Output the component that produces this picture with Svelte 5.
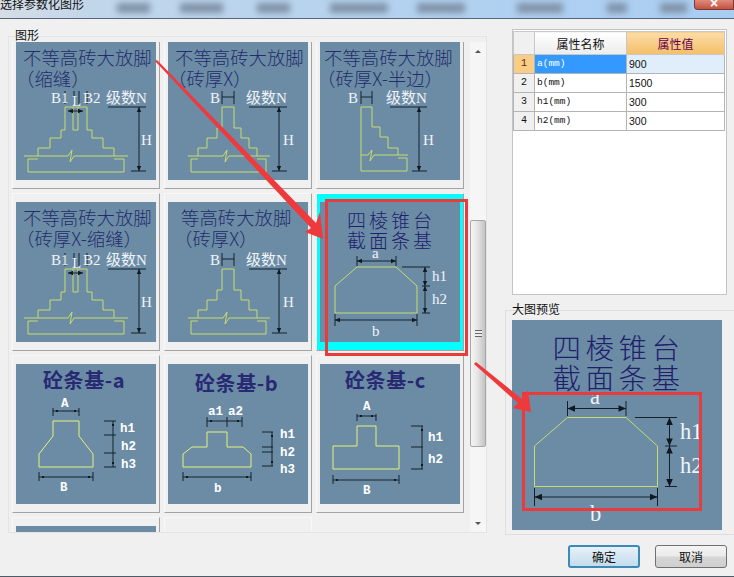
<script lang="ts">
  type Dim = { p: number[]; sq?: boolean };
  type Label = { t: string; x: number; y: number };
  type Drawing = {
    titles: { t: string; x: number; y: number }[];
    heavy?: boolean;
    wide?: boolean;
    shapes: string[];
    ticks: number[][];
    dims: Dim[];
    labels: Label[];
    mono?: boolean;
  };

  const slotted = {
    shapes: [
      "22,116 22,108 34,108 34,98 45,98 45,90 49,90 49,67 71,67 71,90 76,90 76,98 87,98 87,108 98,108 98,116",
      "57,67 57,90 62,90 62,67",
      "8,116 52,116 56,110 54,122 58,116 112,116",
      "22,119 12,119 12,132 108,132 108,119 98,119",
    ],
    ticks: [[49, 51, 49, 64], [58, 51, 58, 64], [63, 51, 63, 64], [71, 51, 71, 64], [92, 67, 130, 67], [115, 131, 130, 131]],
    dims: [{ p: [123, 67, 123, 131] }, { p: [52, 71, 67, 71] }],
    labels: [
      { t: "B1", x: 35, y: 63 },
      { t: "L", x: 56, y: 66 },
      { t: "B2", x: 67, y: 63 },
      { t: "级数N", x: 90, y: 63 },
      { t: "H", x: 125, y: 105 },
    ],
  };

  const plain = {
    shapes: [
      "30,116 30,108 39,108 39,98 49,98 49,88 54,88 54,67 66,67 66,88 73,88 73,98 81,98 81,108 89,108 89,116",
      "20,116 55,116 59,110 57,122 61,116 102,116",
      "30,119 23,119 23,132 98,132 98,119 89,119",
    ],
    ticks: [[54, 51, 54, 64], [66, 51, 66, 64], [54, 57, 66, 57], [81, 67, 119, 67], [104, 131, 119, 131]],
    dims: [{ p: [111, 67, 111, 131] }],
    labels: [
      { t: "B", x: 42, y: 63 },
      { t: "级数N", x: 78, y: 63 },
      { t: "H", x: 115, y: 105 },
    ],
  };

  const half = {
    shapes: [
      "41,131 41,67 52,67 52,87 60,87 60,97 68,97 68,108 78,108 78,115",
      "41,115 48,115 52,110 50,121 54,115 88,115",
      "78,118 87,118 87,131 41,131",
    ],
    ticks: [[41, 51, 41, 64], [52, 51, 52, 64], [41, 57, 52, 57], [70, 67, 107, 67], [92, 131, 107, 131]],
    dims: [{ p: [99, 67, 99, 131] }],
    labels: [
      { t: "B", x: 28, y: 63 },
      { t: "级数N", x: 66, y: 63 },
      { t: "H", x: 103, y: 105 },
    ],
  };

  const frustum: Drawing = {
    titles: [
      { t: "四棱锥台", x: 71, y: 26 },
      { t: "截面条基", x: 71, y: 46 },
    ],
    wide: true,
    shapes: ["37,65 76,65 97,84 97,111 15,111 15,84 37,65"],
    ticks: [[37, 54, 37, 64], [76, 54, 76, 64], [82, 65, 110, 65], [102, 84, 110, 84], [102, 111, 110, 111], [15, 112, 15, 124], [97, 112, 97, 124]],
    dims: [
      { p: [37, 59, 76, 59] },
      { p: [15, 118, 97, 118] },
      { p: [105, 65, 105, 84] },
      { p: [105, 84, 105, 111] },
    ],
    labels: [
      { t: "a", x: 52, y: 56 },
      { t: "b", x: 52, y: 134 },
      { t: "h1", x: 112, y: 79 },
      { t: "h2", x: 112, y: 102 },
    ],
  };

  const tiles: (Drawing & { selected?: boolean })[] = [
    { titles: [{ t: "不等高砖大放脚", x: 7, y: 25 }, { t: "（缩缝）", x: 0, y: 46 }], ...slotted },
    { titles: [{ t: "不等高砖大放脚", x: 7, y: 25 }, { t: "（砖厚X）", x: 0, y: 46 }], ...plain },
    { titles: [{ t: "不等高砖大放脚", x: 4, y: 25 }, { t: "（砖厚X-半边）", x: -3, y: 46 }], ...half },
    { titles: [{ t: "不等高砖大放脚", x: 7, y: 23 }, { t: "（砖厚X-缩缝）", x: 0, y: 44 }], ...slotted },
    { titles: [{ t: "等高砖大放脚", x: 13, y: 23 }, { t: "（砖厚X）", x: 6, y: 44 }], ...plain },
    { ...frustum, selected: true },
    {
      titles: [{ t: "砼条基-a", x: 27, y: 24 }],
      heavy: true,
      mono: true,
      shapes: ["37,57 63,57 63,72 77,90 77,103 23,103 23,90 37,72 37,57"],
      ticks: [[37, 44, 37, 52], [63, 44, 63, 52], [23, 108, 23, 117], [77, 108, 77, 117], [88, 57, 100, 57], [88, 71, 100, 71], [88, 89, 100, 89], [88, 103, 100, 103]],
      dims: [
        { p: [37, 47, 63, 47], sq: true },
        { p: [23, 113, 77, 113], sq: true },
        { p: [97, 57, 97, 103], sq: true },
      ],
      labels: [
        { t: "A", x: 45, y: 43 },
        { t: "B", x: 44, y: 127 },
        { t: "h1", x: 104, y: 68 },
        { t: "h2", x: 105, y: 86 },
        { t: "h3", x: 105, y: 104 },
      ],
    },
    {
      titles: [{ t: "砼条基-b", x: 27, y: 27 }],
      heavy: true,
      mono: true,
      shapes: ["39,68 59,68 59,83 75,83 83,90 83,103 15,103 15,90 24,83 39,83 39,68"],
      ticks: [[39, 53, 39, 63], [59, 53, 59, 63], [74, 53, 74, 63], [15, 108, 15, 117], [83, 108, 83, 117], [94, 68, 105, 68], [94, 83, 105, 83], [94, 88, 105, 88], [94, 102, 105, 102]],
      dims: [
        { p: [39, 57, 74, 57], sq: true },
        { p: [15, 113, 83, 113], sq: true },
        { p: [104, 68, 104, 102], sq: true },
      ],
      labels: [
        { t: "a1", x: 40, y: 51 },
        { t: "a2", x: 60, y: 51 },
        { t: "b", x: 46, y: 128 },
        { t: "h1", x: 112, y: 74 },
        { t: "h2", x: 112, y: 92 },
        { t: "h3", x: 112, y: 109 },
      ],
    },
    {
      titles: [{ t: "砼条基-c", x: 25, y: 24 }],
      heavy: true,
      mono: true,
      shapes: ["37,62 56,62 56,82 79,82 79,105 13,105 13,82 37,82 37,62"],
      ticks: [[37, 50, 37, 57], [56, 50, 56, 57], [13, 111, 13, 120], [79, 111, 79, 120], [91, 62, 103, 62], [91, 83, 103, 83], [91, 105, 103, 105]],
      dims: [
        { p: [37, 52, 56, 52], sq: true },
        { p: [13, 116, 79, 116], sq: true },
        { p: [102, 62, 102, 105], sq: true },
      ],
      labels: [
        { t: "A", x: 43, y: 46 },
        { t: "B", x: 43, y: 130 },
        { t: "h1", x: 108, y: 77 },
        { t: "h2", x: 108, y: 99 },
      ],
    },
    { titles: [], shapes: [], ticks: [], dims: [], labels: [] },
  ];

  const rows = [
    { id: 1, name: "a(mm)", value: "900" },
    { id: 2, name: "b(mm)", value: "1500" },
    { id: 3, name: "h1(mm)", value: "300" },
    { id: 4, name: "h2(mm)", value: "300" },
  ];

  // smudged toolbar in the title bar: [gap before, width]
  const blobs = [
    [33, 33],
    [30, 43],
    [34, 33],
    [40, 58],
    [29, 48],
    [52, 46],
    [44, 20],
    [33, 27],
  ];

  function heads(p: number[], sq = false) {
    const [x1, y1, x2, y2] = p;
    const a = Math.atan2(y2 - y1, x2 - x1);
    const c = Math.cos(a);
    const s = Math.sin(a);
    if (sq) {
      const q = (x: number, y: number) =>
        `${x - 1},${y - 1} ${x + 1},${y - 1} ${x + 1},${y + 1} ${x - 1},${y + 1}`;
      return [q(x1 + c * 4, y1 + s * 4), q(x2 - c * 4, y2 - s * 4)];
    }
    const tri = (x: number, y: number, d: number) =>
      `${x},${y} ${x + d * c * 5 - s * 2.2},${y + d * s * 5 + c * 2.2} ${x + d * c * 5 + s * 2.2},${y + d * s * 5 - c * 2.2}`;
    return [tri(x1, y1, 1), tri(x2, y2, -1)];
  }
</script>

{#snippet drawing(d: Drawing)}
  <svg class="pic" viewBox="0 0 140 140">
    {#each d.titles as title}
      <text
        class="pic__title"
        class:pic__title--heavy={d.heavy}
        class:pic__title--wide={d.wide}
        x={title.x}
        y={title.y}>{title.t}</text>
    {/each}
    {#each d.shapes as points}
      <polyline class="pic__shape" class:pic__shape--bright={d.heavy} {points} />
    {/each}
    {#each d.ticks as t}
      <line class="pic__tick" x1={t[0]} y1={t[1]} x2={t[2]} y2={t[3]} />
    {/each}
    {#each d.dims as dim}
      <line class="pic__tick" x1={dim.p[0]} y1={dim.p[1]} x2={dim.p[2]} y2={dim.p[3]} />
      {#each heads(dim.p, dim.sq) as points}
        <polygon class="pic__head" {points} />
      {/each}
    {/each}
    {#each d.labels as label}
      <text class="pic__label" class:pic__label--mono={d.mono} x={label.x} y={label.y}>{label.t}</text>
    {/each}
  </svg>
{/snippet}

<div class="dialog">
  <header class="titlebar">
    <span class="titlebar__text">选择参数化图形</span>
    <div class="titlebar__blur">
      {#each blobs as b}
        <i style:margin-left="{b[0]}px" style:width="{b[1]}px"></i>
      {/each}
    </div>
    <span class="titlebar__close">×</span>
  </header>

  <main class="body">
    <section class="left">
      <div class="caption">图形</div>
      <div class="group">
        <div class="viewport">
          <div class="tiles">
            {#each tiles as tile}
              <div class="tile" class:tile--selected={tile.selected}>
                {@render drawing(tile)}
              </div>
            {/each}
            <div class="tile"></div>
          </div>
        </div>
        <div class="scroll">
          <div class="scroll__btn"><span class="tri tri--up"></span></div>
          <div class="scroll__thumb"><span class="scroll__grip"></span></div>
          <div class="scroll__rest"></div>
          <div class="scroll__btn"><span class="tri tri--down"></span></div>
        </div>
      </div>
    </section>

    <aside class="right">
      <div class="panel">
        <table>
          <thead>
            <tr>
              <th class="idx"></th>
              <th class="name">属性名称</th>
              <th class="val">属性值</th>
            </tr>
          </thead>
          <tbody>
            {#each rows as row, i}
              <tr class:active={i === 0}>
                <td class="idx">{row.id}</td>
                <td class="name">{row.name}</td>
                <td class="val">{row.value}</td>
              </tr>
            {/each}
          </tbody>
        </table>
      </div>
      <div class="caption caption--preview">大图预览</div>
      <div class="preview">
        {@render drawing(frustum)}
      </div>
    </aside>
  </main>

  <footer class="footer">
    <button class="btn btn--primary">确定</button>
    <button class="btn">取消</button>
  </footer>

  <!-- annotations someone drew over the screenshot -->
  <svg class="marks" viewBox="0 0 734 577">
    <rect x="326.5" y="200.5" width="140" height="154" />
    <rect x="523.5" y="393.5" width="177" height="116" />
    <polygon points="155,61 157,60 316,223 320,212 323,239 305,232 311,228" />
    <polygon points="474,364 476,362 522,399 528,390 531,412 513,408 518,403" />
  </svg>
</div>

<style>
  :global(body) {
    margin: 0;
    background: #f0f0f0;
  }

  .dialog {
    position: relative;
    display: flex;
    flex-direction: column;
    width: 734px;
    height: 577px;
    overflow: hidden;
    background: #f0f0f0;
    color: #111;
    font-family: "Noto Sans CJK SC", "Liberation Sans", sans-serif;
    font-size: 12px;
  }

  .titlebar {
    display: flex;
    flex: none;
    height: 18px;
    overflow: hidden;
    border-bottom: 1px solid #56657a;
    background: linear-gradient(to right, #d5dde6 0, #c2d6ea 90px, #b3d2f0 400px, #a9cdf2 100%);
  }

  .titlebar__text {
    flex: none;
    width: 84px;
    margin-top: -4px;
    font-size: 12px;
    line-height: 16px;
    white-space: nowrap;
  }

  .titlebar__blur {
    display: flex;
    flex: 1;
    align-items: center;
    padding: 0 0 3px;
    filter: blur(3px);
  }

  .titlebar__blur i {
    flex: none;
    height: 10px;
    background: #8093a8;
  }

  .titlebar__close {
    flex: none;
    width: 38px;
    height: 9px;
    border: 1px solid #7a3b34;
    border-top: 0;
    border-radius: 0 0 0 4px;
    background: linear-gradient(#e08b7c, #c4523f);
    color: #fff;
    font-family: "Liberation Sans", sans-serif;
    font-size: 14px;
    font-weight: bold;
    line-height: 6px;
    text-align: center;
  }

  .body {
    display: flex;
    flex: 1;
    min-height: 0;
  }

  .left {
    flex: none;
    width: 497px;
    padding: 9px 0 0 8px;
  }

  .caption {
    position: relative;
    margin-left: 7px;
    font-size: 12px;
    line-height: 14px;
  }

  .group {
    display: flex;
    gap: 2px;
    box-sizing: border-box;
    width: 479px;
    height: 497px;
    margin-top: -6px;
    padding: 5px 0 0 3px;
    border: 1px solid #e2e4e6;
  }

  .viewport {
    flex: none;
    width: 456px;
    overflow: hidden;
  }

  .tiles {
    display: grid;
    grid-template-columns: repeat(3, 148px);
    grid-auto-rows: 158px;
    gap: 4px;
    margin-top: -11px;
  }

  .tile {
    box-sizing: border-box;
    padding: 8px 3px;
    border-right: 1px solid #a3a3a3;
    border-bottom: 1px solid #a3a3a3;
    border-top: 1px solid #f8f8f8;
    border-left: 1px solid #f8f8f8;
  }

  .tile:empty {
    border-color: #f8f8f8;
  }

  .tile--selected {
    background: #00ffff;
  }

  .pic {
    display: block;
    width: 100%;
    height: 140px;
    background: #6c8ca6;
  }

  .pic__title {
    fill: #232c6c;
    font-family: "Noto Sans CJK SC", "Liberation Serif", serif;
    font-size: 18.4px;
    font-weight: 300;
  }

  .pic__title--heavy {
    fill: #272a72;
    font-size: 20px;
    font-weight: 700;
    letter-spacing: 0.6px;
  }

  .pic__title--wide {
    fill: #1e206c;
    font-size: 19px;
    letter-spacing: 3px;
    text-anchor: middle;
  }

  .pic__shape {
    fill: none;
    stroke: #c6dc6c;
    stroke-width: 1;
    vector-effect: non-scaling-stroke;
  }

  .pic__shape--bright {
    stroke: #e4f27a;
  }

  .pic__tick {
    stroke: #14202c;
    stroke-width: 1;
    vector-effect: non-scaling-stroke;
  }

  .pic__head {
    fill: #101820;
  }

  .pic__label {
    fill: #f0f4f8;
    font-family: "Liberation Serif", "Noto Sans CJK SC", serif;
    font-size: 15px;
  }

  .pic__label--mono {
    fill: #fff;
    font-family: "Liberation Mono", monospace;
    font-size: 12.5px;
    font-weight: 700;
  }

  .scroll {
    display: flex;
    flex: none;
    flex-direction: column;
    width: 16px;
    background: #f6f6f6;
  }

  .scroll__btn {
    display: flex;
    flex: none;
    align-items: center;
    justify-content: center;
    height: 18px;
  }

  .tri {
    width: 0;
    height: 0;
    border-right: 3px solid transparent;
    border-left: 3px solid transparent;
  }

  .tri--up {
    border-bottom: 3px solid #555;
  }

  .tri--down {
    border-top: 3px solid #555;
  }

  .scroll__thumb {
    display: flex;
    flex: none;
    align-items: center;
    justify-content: center;
    box-sizing: border-box;
    height: 227px;
    margin-top: 160px;
    border: 1px solid #a8a8a8;
    border-radius: 2px;
    background: linear-gradient(to right, #f4f4f4, #e8e8e8 40%, #c4c4c4);
  }

  .scroll__grip {
    width: 7px;
    height: 7px;
    background: repeating-linear-gradient(#666 0 1px, #eee 1px 3px);
  }

  .scroll__rest {
    flex: 1;
  }

  .right {
    flex: 1;
    padding: 10px 0 0;
  }

  .panel {
    box-sizing: border-box;
    width: 215px;
    height: 266px;
    margin-left: 7px;
    padding: 1px 0 0 0;
    border: 1px solid #c4c4c4;
    background: #fff;
  }

  table {
    width: 212px;
    table-layout: fixed;
    border-collapse: collapse;
    font-size: 11px;
  }

  th {
    height: 22px;
    padding: 0;
    border: 1px solid #c8c8c8;
    background: linear-gradient(#fff, #ececec);
    font-size: 12px;
    font-weight: 400;
  }

  th.idx {
    width: 20px;
    background: #f0f0f0;
  }

  th.name {
    width: 91px;
  }

  th.val {
    background: linear-gradient(#fbdca8, #f5bf68);
    color: #6a0050;
  }

  td {
    height: 18px;
    padding: 0 0 0 2px;
    border: 1px solid #b4b4b4;
    line-height: 18px;
  }

  td.idx {
    padding: 0;
    background: #f0f0f0;
    text-align: center;
    font-family: "Liberation Mono", monospace;
    font-size: 10px;
  }

  td.name {
    font-family: "Liberation Mono", monospace;
    font-size: 9.5px;
  }

  td.val {
    font-family: "Liberation Sans", sans-serif;
    font-size: 10.5px;
  }

  .active td.idx {
    background: #f8cd85;
    color: #6a1a10;
  }

  .active td.name {
    background: #3399ff;
    color: #fff;
  }

  .active td.val {
    background: #e0eefc;
  }

  .caption--preview {
    margin: 7px 0 0 7px;
  }

  .preview {
    box-sizing: border-box;
    height: 225px;
    margin-top: -6px;
    padding: 9px 0 0 6px;
    border: 1px solid #dcdfe2;
    border-right: 0;
  }

  .preview .pic {
    width: 210px;
    height: 210px;
  }

  .footer {
    display: flex;
    flex: none;
    gap: 15px;
    justify-content: flex-end;
    box-sizing: border-box;
    height: 43px;
    padding: 11px 7px 0 0;
    border-bottom: 1px solid #4d5a68;
  }

  .btn {
    width: 72px;
    height: 23px;
    padding: 0;
    border: 1px solid #707070;
    border-radius: 3px;
    background: linear-gradient(#f4f4f4 0, #ebebeb 48%, #d6d6d6 52%, #cfcfcf 100%);
    color: #111;
    font-family: inherit;
    font-size: 12px;
    line-height: 20px;
  }

  .btn--primary {
    border: 2px solid #3c8ab8;
    background: linear-gradient(#e6f1f8, #c4dcec);
  }

  .marks {
    position: absolute;
    top: 0;
    left: 0;
    width: 734px;
    height: 577px;
    pointer-events: none;
  }

  .marks rect {
    fill: none;
    stroke: #e83c3c;
    stroke-width: 3;
  }

  .marks polygon {
    fill: #ee3a3c;
  }
</style>
